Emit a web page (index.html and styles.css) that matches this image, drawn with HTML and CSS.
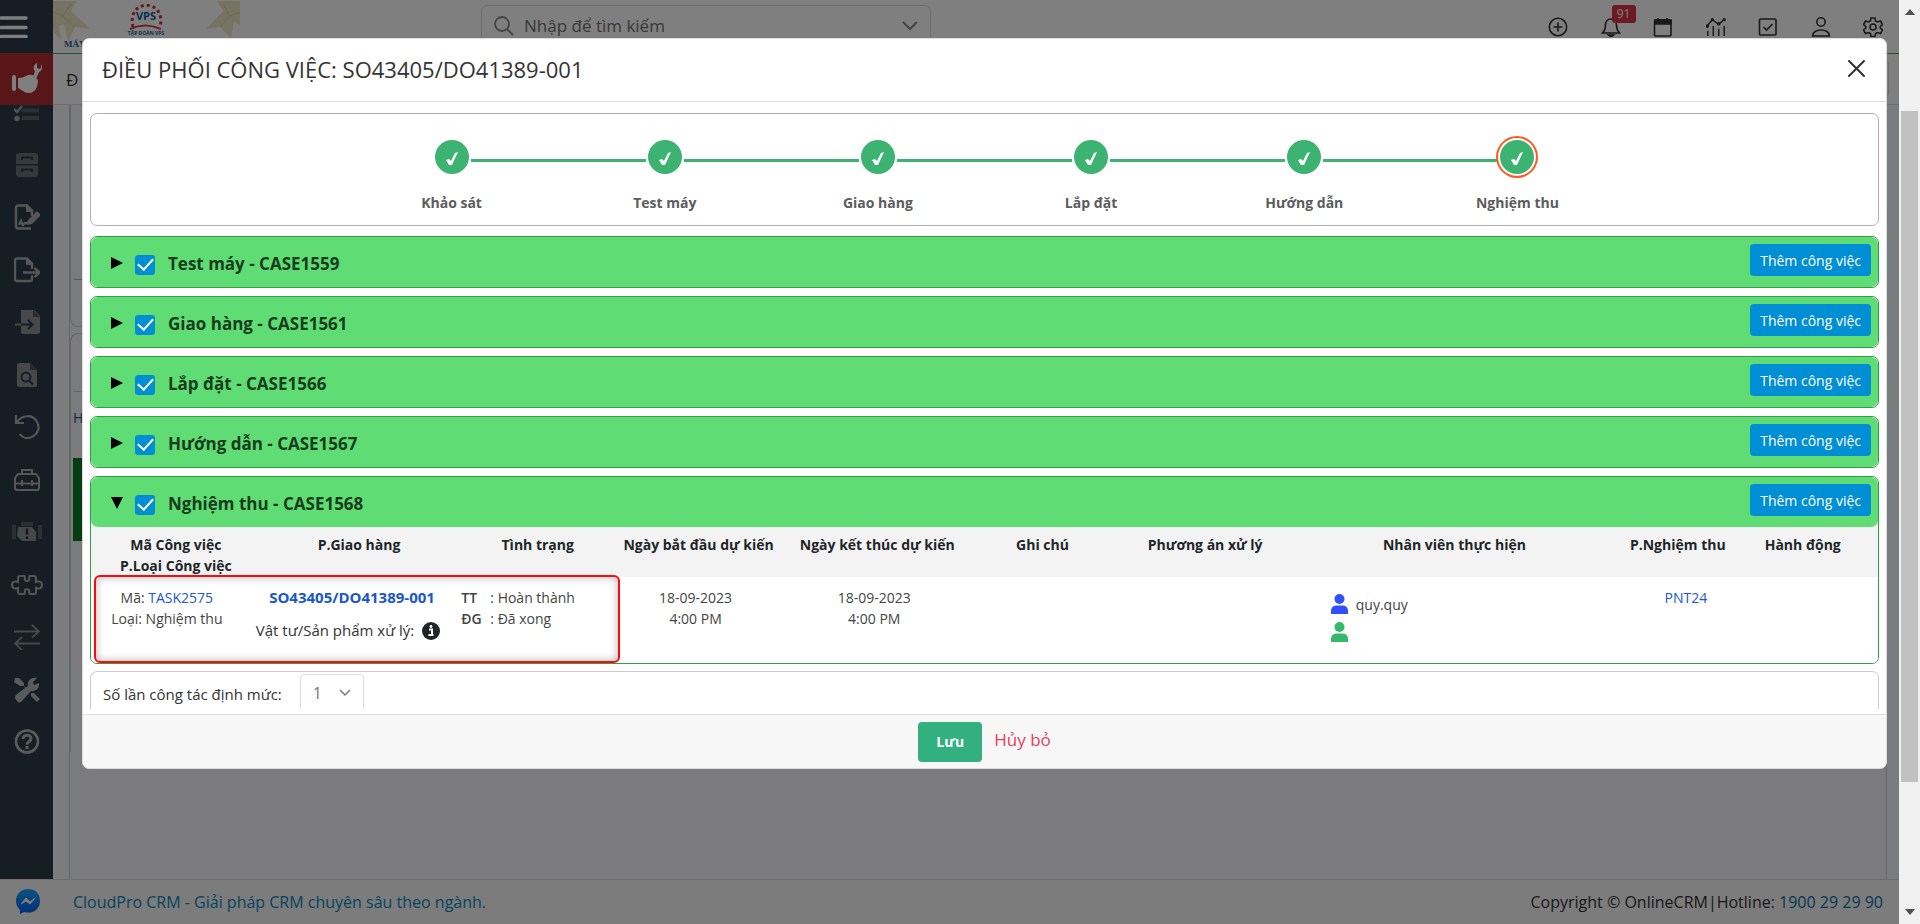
FILE: index.html
```html
<!DOCTYPE html>
<html lang="vi">
<head>
<meta charset="utf-8">
<title>CloudPro CRM</title>
<link rel="stylesheet" href="styles.css">
</head>
<body>
<div class="app">
  <div class="page">
    <aside class="sidebar">
      <button class="burger" aria-label="Menu"><svg width="28" height="22" viewBox="0 0 28 22"><path d="M1 2H26M1 11.500H26M1 20.500H26" stroke="#fff" stroke-width="3.500" stroke-linecap="round"/></svg></button>
      <a class="current" href="#" aria-label="Bảo trì"><svg width="32" height="32" viewBox="0 0 32 32" fill="#fff"><rect x="1" y="12" width="4" height="16" rx="2"/><path d="M7 15q5 0 8-2 3-2 7-1l1 3q4 0 4 3l-1 6q-3 6-8 6-4 0-6-2l-5-3z"/><path d="M22 14l2-6c-2-2-2-6 2-8v5l2 1 2-1V1c2 3 1 7-2 8l-3 7z"/></svg></a>
      <nav class="nav">
        <a href="#" aria-label="Công việc"><svg viewBox="0 0 26 26"><path d="M8 4.500H25M8 11.500H25M8 19H25" stroke="#566069" stroke-width="4"/><path d="M0 3l2 2 4-5M0 10l3 3 5-6" stroke="#9aa3aa" stroke-width="2.500" fill="none"/><circle cx="3" cy="19.500" r="2.800" fill="#9aa3aa"/></svg></a>
        <a href="#" aria-label="Kho"><svg viewBox="0 0 26 26"><path d="M4 1h18l2 2v9H2V3zM2 13.500h22V23l-2 2H4l-2-2z" fill="#68727b"/><path d="M8 8V5.500h10V8M8 20v-2.500h10V20" fill="none" stroke="#2d3a49" stroke-width="2"/></svg></a>
        <a href="#" aria-label="Hợp đồng"><svg viewBox="0 0 26 26"><path d="M17 24.500H4.500Q2 24.500 2 22V4q0-2.500 2.500-2.500H13l5 5V12M5 21l2-4 2 4 2-2h4" fill="none" stroke="#a9acae" stroke-width="2.400"/><path d="M12 1v7h7zM14 16l9-9 4 4-9 9-5 1z" fill="#a9acae"/></svg></a>
        <a href="#" aria-label="Xuất"><svg viewBox="0 0 26 26"><path d="M18 18.500V22q0 2-2 2H3q-2 0-2-2V4q0-2.500 2-2.500h10l5 5V12M9 15.500h16M20.500 11l5 4.500-5 4.500" fill="none" stroke="#a9acae" stroke-width="2.400"/><path d="M12 1v7h7z" fill="#a9acae"/></svg></a>
        <a href="#" aria-label="Nhập"><svg viewBox="0 0 26 26"><path d="M7 1h13l6 6v16q0 2-2 2H9q-2 0-2-2z" fill="#8c9195"/><path d="M19 1v7h7z" fill="#4b5661"/><path d="M1 15.500h6" stroke="#8c9195" stroke-width="2"/><path d="M7 15.500h11M14 11l4.500 4.500L14 20" fill="none" stroke="#2d3a49" stroke-width="2"/></svg></a>
        <a href="#" aria-label="Tra cứu"><svg viewBox="0 0 26 26"><path d="M5 1h11l7 7v15q0 2-2 2H5q-2 0-2-2V3q0-2 2-2z" fill="#8c9195"/><path d="M16 1v7h7z" fill="#4b5661"/><circle cx="12" cy="15" r="4.500" fill="none" stroke="#2d3a49" stroke-width="2"/><path d="M15 18.500l4 4" stroke="#2d3a49" stroke-width="2"/></svg></a>
        <a href="#" aria-label="Hoàn tác"><svg viewBox="0 0 26 26" fill="none" stroke="#a9acae" stroke-width="2.200"><path d="M3 8C8 1 18 0 22.500 7s1 14-6 16.500C12 25 8 23 6 20M2 1v8h8"/></svg></a>
        <a href="#" aria-label="Dụng cụ"><svg viewBox="0 0 26 26" fill="none" stroke="#a9acae" stroke-width="2"><path d="M8 7V3h10v4M4 7h18l3 4v10q0 2-2 2H3q-2 0-2-2V11zM1 16.500h24M8 13v6M18 13v6"/></svg></a>
        <a href="#" aria-label="Cảnh báo"><svg viewBox="0 0 32 26"><path d="M1 6h4v14H1zM27 6h4v14h-4zM10 3h12v4H10z" fill="#56606a"/><path d="M7 8h14l4 5v9H11l-5-5z" fill="#8c9195"/><path d="M16 9.500v6M16 17.500v2.500" stroke="#222e3a" stroke-width="2.400"/></svg></a>
        <a href="#" aria-label="Phụ tùng"><svg viewBox="0 0 32 26" fill="none" stroke="#a9acae" stroke-width="2"><path d="M9 4h4.500c1 1-1 5 2.500 5s1.500-4 2.500-5H23q2 0 2 2v4c2-1 6-1 6 3s-4 4-6 3v4q0 2-2 2h-4.500c-1-1 1-5-2.500-5s-1.500 4-2.500 5H9q-2 0-2-2v-4c-2 1-6 1-6-3s4-4 6-3V6q0-2 2-2z"/></svg></a>
        <a href="#" aria-label="Chuyển đổi"><svg viewBox="0 0 26 26" fill="none" stroke="#8e9499" stroke-width="1.800"><path d="M0 7.500h25M18 1l7 6.500-7 6M26 19.500H1M8 13l-7 6.500L8 26"/></svg></a>
        <a href="#" aria-label="Cài đặt"><svg viewBox="0 0 26 26"><path d="M1 1h4l5 5v4l7 6h3l6 6-3 3-6-6v-3l-7-7H6L0 5z" fill="#b4b7b9"/><path d="M3 24q-4-4 0-7l11-8c-1-5 3-9 9-8l-4 4 1 3 5-2c1 5-3 9-8 8L8 24q-3 3-5 0z" fill="#b4b7b9"/></svg></a>
        <a href="#" aria-label="Trợ giúp"><svg viewBox="0 0 26 26" fill="none" stroke="#b4b7b9"><circle cx="13" cy="12.500" r="11" stroke-width="2.600"/><path d="M9 10c0-5 8-5 8-.500 0 3-4 3-4 6M13 17v3" stroke-width="3"/></svg></a>
      </nav>
    </aside>
    <div class="main">
      <header class="topbar">
        <svg class="logo" width="188" height="51" viewBox="0 0 188 51">
          <rect width="188" height="51" fill="#fff"/>
          <g fill="#efe6c4"><path d="M0 1h24l-6 10 19 18-15-2-7 15-4-18-11 5zM0 31l4-9 5 18zM187 1h-23l6 10-17 18 14-2 11 11 3-16 6 3z"/></g>
          <g fill="none" stroke="#d9d0ac"><path d="M0 12l10 4L18 4M10 16l12 11M187 12l-10 4-7-12M177 16l-10 11"/></g>
          <path d="M80 27c-7-29 34-29 27 0" fill="none" stroke="#c9343c" stroke-width="3" stroke-dasharray="3 3"/>
          <path d="M77 29q15-7 31 0" fill="none" stroke="#d5434b" stroke-width="2"/>
          <text x="93" y="20" text-anchor="middle" class="logo-vps">VPS</text>
          <text x="93" y="35" text-anchor="middle" class="logo-sub">TẬP ĐOÀN VPS</text>
          <text x="11" y="47" class="logo-may">MÁY</text>
        </svg>
        <label class="search">
          <svg width="20" height="20" viewBox="0 0 20 20" fill="none" stroke="#888" stroke-width="1.800"><circle cx="8" cy="8" r="7"/><path d="M13 13l6 6"/></svg>
          <input type="text" placeholder="Nhập để tìm kiếm">
          <svg width="16" height="10" viewBox="0 0 16 10" fill="none" stroke="#888" stroke-width="2"><path d="M1 1l7 7 7-7"/></svg>
        </label>
        <div class="tools">
          <button aria-label="Thêm"><svg viewBox="0 0 20 20"><circle cx="10" cy="10" r="8.700"/><path d="M10 5.500v9M5.500 10h9"/></svg></button>
          <button class="bell" aria-label="Thông báo"><svg viewBox="0 0 20 20"><path d="M10 2C6 2 4.500 5 4.500 8c0 4-1 6-3 8h17c-2-2-3-4-3-8 0-3-1.500-6-5.500-6z"/><path d="M7.500 18h5l-2.500 2z" fill="#333"/></svg><span class="badge">91</span></button>
          <button aria-label="Lịch"><svg viewBox="0 0 20 20"><rect x="1.500" y="3" width="16.500" height="16" rx="1"/><path d="M2 3h16v4H2zM5 1v3M14 1v3" fill="#333"/></svg></button>
          <button aria-label="Báo cáo"><svg viewBox="0 0 22 20"><path d="M1 9l6-7 7 5 7-6M2 14v6M8 9v11M14 12v8M20 9v11"/><g fill="#333" stroke="none"><circle cx="1.500" cy="9" r="2"/><circle cx="7" cy="2" r="1.800"/><circle cx="14" cy="6.500" r="2"/><circle cx="20" cy="2" r="1.800"/></g></svg></button>
          <button aria-label="Việc cần làm"><svg viewBox="0 0 20 20"><rect x="1.500" y="2" width="16.500" height="16" rx="1"/><path d="M5.500 10l3 3 6-6"/></svg></button>
          <button aria-label="Tài khoản"><svg viewBox="0 0 20 20"><circle cx="10" cy="5" r="4.200"/><path d="M1.500 19c0-8 17-8 17 0z"/></svg></button>
          <button aria-label="Thiết lập"><svg viewBox="0 0 20 20"><circle cx="10" cy="10" r="3"/><path d="M8 1h4l.500 3 2 1 3-1 2 3.500-2.300 2v1.500l2.300 2-2 3.500-3-1-2 1-.500 3H8l-.500-3-2-1-3 1-2-3.500L2.800 11V9.500l-2.300-2 2-3.500 3 1 2-1z"/></svg></button>
        </div>
      </header>
      <div class="crumbs"><span>Đ</span><i class="crumb-box"></i></div>
      <div class="content">
        <section class="back-card first"><hr></section>
        <section class="back-card second"><p class="back-head">H</p><div class="back-green"></div></section>
      </div>
    </div>
    <footer class="footer">
      <svg width="24" height="26" viewBox="0 0 24 26"><defs><linearGradient id="m" x2="0" y2="1"><stop offset="0" stop-color="#12aaff"/><stop offset="1" stop-color="#0a5cf0"/></linearGradient></defs><path d="M12 0C5 0 0 5 0 12c0 4 1.500 6.500 4 9v4l4-2c9 2.500 16-3 16-11S19 0 12 0z" fill="url(#m)"/><path d="M5 15l5-6 4 4 5-4-5 6-4-3z" fill="#fff" stroke="#fff"/></svg>
      <a href="#">CloudPro CRM - Giải pháp CRM chuyên sâu theo ngành.</a>
      <span class="copy">Copyright © OnlineCRM|Hotline: <a href="#">1900 29 29 90</a></span>
    </footer>
    <div class="shade"></div>

    <div class="modal" role="dialog" aria-labelledby="title">
      <header class="modal-head">
        <h1 id="title">ĐIỀU PHỐI CÔNG VIỆC: SO43405/DO41389-001</h1>
        <button class="close" aria-label="Đóng"><svg width="17" height="17" viewBox="0 0 17 17"><path d="M1 1l15 15M16 1L1 16" stroke="#333" stroke-width="2" stroke-linecap="round"/></svg></button>
      </header>
      <div class="modal-body">
        <div class="scroll">
          <ol class="steps">
            <li><span class="dot"><svg viewBox="0 0 14 14"><path d="M1 8l3-1 2 2 4-8 3-1L7 13H4z"/></svg></span>Khảo sát</li>
            <li><span class="dot"><svg viewBox="0 0 14 14"><path d="M1 8l3-1 2 2 4-8 3-1L7 13H4z"/></svg></span>Test máy</li>
            <li><span class="dot"><svg viewBox="0 0 14 14"><path d="M1 8l3-1 2 2 4-8 3-1L7 13H4z"/></svg></span>Giao hàng</li>
            <li><span class="dot"><svg viewBox="0 0 14 14"><path d="M1 8l3-1 2 2 4-8 3-1L7 13H4z"/></svg></span>Lắp đặt</li>
            <li><span class="dot"><svg viewBox="0 0 14 14"><path d="M1 8l3-1 2 2 4-8 3-1L7 13H4z"/></svg></span>Hướng dẫn</li>
            <li class="active"><span class="dot"><svg viewBox="0 0 14 14"><path d="M1 8l3-1 2 2 4-8 3-1L7 13H4z"/></svg></span>Nghiệm thu</li>
          </ol>
          <section class="case"><div class="case-head"><button class="toggle" aria-label="Mở rộng"><svg viewBox="0 0 12 12"><path d="M0 0l12 6-12 6z"/></svg></button><input type="checkbox" id="c1" checked><label for="c1">Test máy - CASE1559</label><button class="add">Thêm công việc</button></div></section>
          <section class="case"><div class="case-head"><button class="toggle" aria-label="Mở rộng"><svg viewBox="0 0 12 12"><path d="M0 0l12 6-12 6z"/></svg></button><input type="checkbox" id="c2" checked><label for="c2">Giao hàng - CASE1561</label><button class="add">Thêm công việc</button></div></section>
          <section class="case"><div class="case-head"><button class="toggle" aria-label="Mở rộng"><svg viewBox="0 0 12 12"><path d="M0 0l12 6-12 6z"/></svg></button><input type="checkbox" id="c3" checked><label for="c3">Lắp đặt - CASE1566</label><button class="add">Thêm công việc</button></div></section>
          <section class="case"><div class="case-head"><button class="toggle" aria-label="Mở rộng"><svg viewBox="0 0 12 12"><path d="M0 0l12 6-12 6z"/></svg></button><input type="checkbox" id="c4" checked><label for="c4">Hướng dẫn - CASE1567</label><button class="add">Thêm công việc</button></div></section>
          <section class="case open"><div class="case-head"><button class="toggle" aria-label="Thu gọn"><svg viewBox="0 0 12 12"><path d="M0 0h12L6 12z"/></svg></button><input type="checkbox" id="c5" checked><label for="c5">Nghiệm thu - CASE1568</label><button class="add">Thêm công việc</button></div>
            <table class="tasks">
              <colgroup><col class="w-code"><col class="w-ship"><col class="w-state"><col class="w-start"><col class="w-end"><col class="w-note"><col class="w-plan"><col class="w-staff"><col class="w-accept"><col></colgroup>
              <thead><tr><th class="th-code">Mã Công việc<br>P.Loại Công việc</th><th>P.Giao hàng</th><th>Tình trạng</th><th>Ngày bắt đầu dự kiến</th><th>Ngày kết thúc dự kiến</th><th>Ghi chú</th><th>Phương án xử lý</th><th>Nhân viên thực hiện</th><th>P.Nghiệm thu</th><th class="last">Hành động</th></tr></thead>
              <tbody><tr>
                <td class="code">Mã: <a href="#">TASK2575</a><br>Loại: Nghiệm thu</td>
                <td><a class="order" href="#">SO43405/DO41389-001</a><div class="goods">Vật tư/Sản phẩm xử lý: <svg width="18" height="18" viewBox="0 0 18 18"><circle cx="9" cy="9" r="9" fill="#212529"/><path d="M7 7.500h3v5M6.500 13h5" fill="none" stroke="#fff" stroke-width="2"/><circle cx="9" cy="4.500" r="1.400" fill="#fff"/></svg></div></td>
                <td class="state"><dl><dt>TT</dt><dd>: Hoàn thành</dd><dt>ĐG</dt><dd>: Đã xong</dd></dl></td>
                <td class="date">18-09-2023<br>4:00 PM</td>
                <td class="date">18-09-2023<br>4:00 PM</td>
                <td></td><td></td>
                <td class="staff"><div class="person blue"><svg viewBox="0 0 17 20"><circle cx="8.500" cy="5" r="5"/><path d="M0 20v-3q0-5 5-5.500h7q5 .500 5 5.500v3z"/></svg>quy.quy</div><div class="person green"><svg viewBox="0 0 17 20"><circle cx="8.500" cy="5" r="5"/><path d="M0 20v-3q0-5 5-5.500h7q5 .500 5 5.500v3z"/></svg></div></td>
                <td class="accept"><a href="#">PNT24</a></td>
                <td></td>
              </tr></tbody>
            </table>
            <div class="highlight"></div>
          </section>
          <div class="norm"><label for="times">Số lần công tác định mức:</label><span class="select-wrap"><select id="times"><option>1</option></select><svg width="12" height="8" viewBox="0 0 12 8" fill="none" stroke="#777" stroke-width="1.500"><path d="M1 1l5 5 5-5"/></svg></span></div>
        </div>
      </div>
      <footer class="modal-foot"><button class="save">Lưu</button><a href="#">Hủy bỏ</a></footer>
    </div>
  </div>
  <div class="rail"><svg width="10" height="6" viewBox="0 0 10 6"><path d="M0 6h10L5 0z"/></svg><div class="track"><div class="thumb"></div></div><svg width="10" height="6" viewBox="0 0 10 6"><path d="M0 0h10L5 6z"/></svg></div>
</div>
</body>
</html>
```

FILE: styles.css
```css
* { box-sizing: border-box; }
body { margin: 0; font: 14px/21px "Open Sans", "Noto Sans", sans-serif; color: #333; }
button { border: 0; padding: 0; background: none; font: inherit; color: inherit; }
a { color: #1a56cc; text-decoration: none; }
svg { display: block; flex: none; }
.app { display: flex; height: 100vh; overflow: hidden; }
.page { position: relative; flex: 1; display: grid; grid-template: minmax(0, 1fr) 45px / 53px minmax(0, 1fr); }

.sidebar { display: flex; flex-direction: column; background: #2d3b4a; overflow: hidden; }
.burger { height: 53px; flex: none; }
.current { display: flex; align-items: center; justify-content: center; height: 52px; flex: none; background: #b02c30; z-index: 1; }
.nav { flex: 1; display: flex; flex-direction: column; align-items: center; justify-content: space-between; margin-top: -6px; padding-bottom: 124px; }
.nav svg { height: 26px; }

.main { display: flex; flex-direction: column; min-width: 0; background: #f6f8fb; }
.topbar { display: flex; justify-content: space-between; height: 54px; flex: none; background: #fff; border-bottom: 1px solid #3cb371; padding-right: 16px; }
.logo-vps { font: bold 11px "Open Sans", sans-serif; fill: #1b5a9c; }
.logo-sub { font: bold 5px "Open Sans", sans-serif; fill: #1b5a9c; }
.logo-may { font: bold 9px "Liberation Serif", serif; fill: #1b5a9c; }
.search { display: flex; align-items: center; gap: 10px; width: 450px; height: 42px; margin: 5px auto 0 240px; padding: 0 12px; border: 1px solid #ddd; border-radius: 6px; }
.search input { flex: 1; min-width: 0; border: 0; outline: 0; background: none; padding: 0; font: 17px/24px "Open Sans", sans-serif; }
.search input::placeholder { color: #707070; opacity: 1; }
.tools { display: flex; justify-content: space-between; align-items: center; width: 335px; height: 53px; }
.tools button { position: relative; }
.tools svg { width: 20px; height: 20px; fill: none; stroke: #333; stroke-width: 1.6; }
.badge { position: absolute; left: 11px; top: -12px; width: 24px; border-radius: 3px; background: #d93644; color: #fff; font-size: 12px; line-height: 18px; }
.crumbs { display: flex; justify-content: space-between; align-items: center; height: 51px; flex: none; padding: 0 10px 0 13px; background: #fff; border-bottom: 1px solid #ddd; font-size: 17px; }
.crumb-box { width: 40px; height: 38px; border: 1px solid #ddd; border-radius: 4px; }
.content { flex: 1; min-height: 0; margin: 0 12px 0 16px; border: 1px solid #ccc; border-width: 0 1px; background: #f6f7fa; }
.back-card { border: 1px solid #ccc; border-radius: 0 0 8px 8px; }
.first { height: 222px; padding: 174px 0 0 3px; border-top: 0; }
.first hr { margin: 0; border: 0; border-top: 1px solid #aaa; }
.second { height: 419px; margin-top: 6px; border-radius: 8px 8px 0 0; border-bottom: 0; padding: 57px 0 0 2px; }
.back-head { margin: 0; padding: 15px 0; height: 67px; border-top: 1px solid #ccc; color: #1a5a8c; }
.back-green { height: 83px; background: #087a22; }

.footer { grid-column: 1 / 3; display: flex; align-items: center; gap: 33px; padding: 0 16px; border-top: 1px solid #ddd; background: #f6f8f6; font-size: 16px; }
.footer a { color: #0d86c2; }
.copy { margin-left: auto; }
.footer .copy a { color: #0a6fa8; }
.shade { position: absolute; inset: 0; background: rgba(0, 0, 0, .5); z-index: 2; }

.modal { position: absolute; inset: 38px 12px 155px 82px; z-index: 3; display: flex; flex-direction: column; background: #fff; border: 1px solid #ddd; border-radius: 7px; overflow: hidden; }
.modal-head { display: flex; justify-content: space-between; align-items: center; height: 63px; flex: none; padding: 0 21px 2px 19px; border-bottom: 1px solid #ddd; }
.modal-head h1 { margin: 0; font-size: 22px; font-weight: 400; line-height: 28px; }
.close { padding: 0 0 2px; }
.modal-body { flex: 1; min-height: 0; padding: 11px 7px 5px; }
.scroll { height: 100%; overflow: hidden; display: flex; flex-direction: column; gap: 8px; }
.scroll > * { flex: none; }
.steps { list-style: none; display: flex; justify-content: center; margin: 0 0 2px; padding: 26px 254px 12px; border: 1px solid #c0aab0; border-radius: 7px; font-weight: 700; color: #5c5c5c; }
.steps li { flex: 1; display: flex; flex-direction: column; align-items: center; gap: 18px; position: relative; line-height: 21px; }
.steps li + li::before { content: ""; position: absolute; top: 19px; left: calc(-50% + 19px); right: calc(50% + 19px); height: 3px; background: #3cb371; }
.dot { display: flex; align-items: center; justify-content: center; width: 34px; height: 34px; border-radius: 50%; background: #3cb371; box-shadow: 0 0 0 2px #fff; z-index: 1; }
.dot svg { width: 14px; height: 14px; fill: #fff; margin-top: 4px; }
.active .dot { box-shadow: 0 0 0 2px #fff, 0 0 0 4px #ff5722; }

.case { position: relative; border: 1px solid #2f9e46; border-radius: 7px; overflow: hidden; background: #f3f3f3; }
.case-head { display: flex; align-items: center; height: 50px; padding: 2px 7px 0 20px; background: #60dc74; border-radius: 7px; }
.toggle svg { width: 12px; height: 12px; }
.case input { appearance: none; width: 20px; height: 20px; margin: 3px 13px 0 12px; border-radius: 3px; background: #008fd5; display: grid; place-items: center; }
.case input::after { content: ""; width: 7px; height: 13px; margin-top: -4px; border: solid #fff; border-width: 0 2px 2px 0; transform: rotate(42deg); }
.case label { font-size: 17px; font-weight: 700; color: #173d1e; }
.add { margin: 0 0 6px auto; height: 32px; padding: 0 10px; border-radius: 4px; background: #008fd5; color: #fff; }
.tasks { width: 100%; table-layout: fixed; border-collapse: collapse; text-align: center; background: #fff; }
.w-code { width: 9.5%; } .w-ship { width: 11%; } .w-state { width: 9%; } .w-start { width: 9%; } .w-end { width: 11%; }
.w-note { width: 7.5%; } .w-plan { width: 10.7%; } .w-staff { width: 17.2%; } .w-accept { width: 7.8%; }
.tasks th { padding: 7px 0 1px; background: #f3f3f3; color: #212529; font-weight: 700; white-space: nowrap; vertical-align: top; }
.tasks .last { padding-right: 20px; }
.tasks td { height: 86px; padding: 10px 0 0; vertical-align: top; color: #444; }
.tasks .code { padding-right: 18px; }
.tasks .date { padding-right: 6px; }
.tasks .accept { padding-left: 16px; }
.tasks .order { font-size: 15px; font-weight: 700; margin-right: 14px; }
.goods { display: flex; justify-content: center; align-items: center; gap: 8px; margin: 12px 22px 0 0; color: #333; font-size: 15px; white-space: nowrap; }
.tasks .state { text-align: left; }
.state dl { display: grid; grid-template-columns: 29px 1fr; margin: 0; padding-left: 4px; }
.state dt { font-weight: 600; }
.state dd { margin: 0; white-space: nowrap; }
.tasks .staff { padding: 13px 0 0 30px; }
.person { display: flex; align-items: center; gap: 8px; height: 28px; }
.person svg { width: 17px; height: 20px; }
.blue svg { fill: #3050ff; }
.green svg { fill: #34b86a; }
.highlight { position: absolute; left: 3px; top: 98px; width: 526px; height: 88px; border: 2px solid #fa0a10; border-radius: 6px; box-shadow: inset 0 0 8px rgba(0, 0, 0, .3); pointer-events: none; }
.norm { display: flex; align-items: center; gap: 18px; height: 54px; margin-top: -1px; padding: 0 12px; border: 1px solid #ccc; border-radius: 7px; font-size: 15px; }
.norm label { margin-top: -8px; }
.select-wrap { position: relative; display: block; margin-top: -5px; }
.select-wrap svg { position: absolute; right: 13px; top: 15px; }
.norm select { appearance: none; width: 64px; height: 44px; padding: 0 12px 6px; border: 1px solid #ddd; border-radius: 4px; background: #fff; color: #777; font: 16px "Open Sans", sans-serif; }
.modal-foot { display: flex; justify-content: center; align-items: center; gap: 12px; height: 54px; flex: none; border-top: 1px solid #ddd; background: #f7f7f7; }
.modal-foot a { color: #e84060; font-size: 17px; padding-bottom: 4px; }
.save { width: 64px; height: 40px; border-radius: 4px; background: #32b080; color: #fff; font-weight: 700; }

.rail { display: flex; flex-direction: column; align-items: center; width: 21px; padding: 9px 2px 9px; background: #f1f1f1; }
.rail svg { fill: #505050; }
.track { flex: 1; width: 100%; padding: 96px 0 127px; }
.thumb { height: 100%; background: #c1c1c1; }
```
